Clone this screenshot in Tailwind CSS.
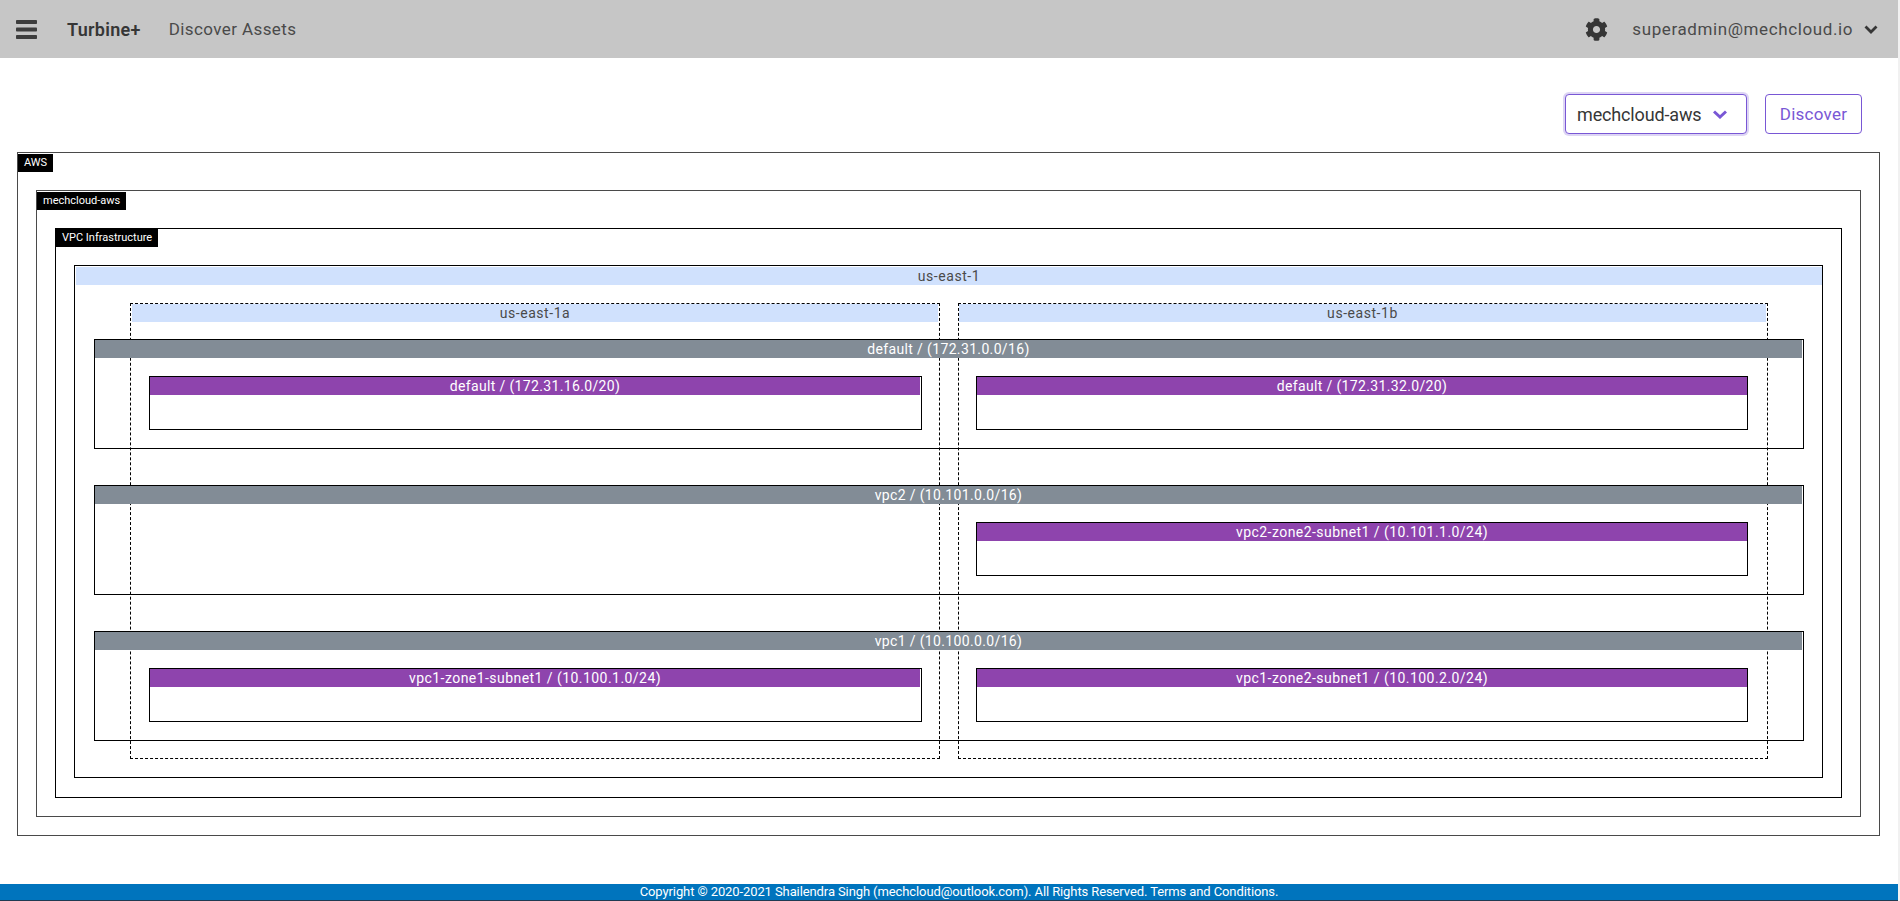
<!DOCTYPE html>
<html lang="en">
<head>
    <meta charset="UTF-8">
    <meta name="viewport" content="width=device-width, initial-scale=1.0">
    <title>Turbine+ - Discover Assets</title>
    <script src="https://cdn.jsdelivr.net/npm/@tailwindcss/browser@4"></script>
</head>
<body class="bg-[#f1f1f1] font-['Roboto',sans-serif] text-[#363636] overflow-hidden">
    <div class="w-[1898px] h-[901px] bg-white flex flex-col">
        <!-- Navbar -->
        <nav class="h-[58px] shrink-0 bg-[#c6c6c6] flex items-center justify-between">
            <div class="flex items-center">
                <svg class="ml-[16px] w-[21px] h-[19px] fill-[#3d3d3d]" viewBox="0 0 21 19">
                    <rect x="0" y="0" width="21" height="4" rx="0.8"></rect>
                    <rect x="0" y="7.5" width="21" height="4" rx="0.8"></rect>
                    <rect x="0" y="15" width="21" height="4" rx="0.8"></rect>
                </svg>
                <a href="#" class="ml-[30px] pt-px text-[18px] font-semibold tracking-[0.3px]">Turbine+</a>
                <a href="#" class="ml-[28px] pt-[2px] text-[17px] tracking-[0.4px] text-[#4a4a4a]">Discover Assets</a>
            </div>
            <div class="flex items-center">
                <svg class="w-[23px] h-[23px] fill-[#363636]" viewBox="0 0 512 512">
                    <path d="M487.4 315.7l-42.6-24.6c4.3-23.2 4.3-47 0-70.2l42.6-24.6c4.9-2.8 7.1-8.6 5.5-14-11.1-35.6-30-67.8-54.7-94.6-3.8-4.1-10-5.1-14.8-2.3L380.8 110c-17.9-15.4-38.5-27.3-60.8-35.1V25.8c0-5.6-3.9-10.5-9.4-11.7-36.7-8.2-74.3-7.8-109.2 0-5.5 1.2-9.4 6.1-9.4 11.7V75c-22.2 7.9-42.8 19.8-60.8 35.1L88.7 85.5c-4.9-2.8-11-1.9-14.8 2.3-24.7 26.7-43.6 58.9-54.7 94.6-1.7 5.4.6 11.2 5.5 14L67.3 221c-4.3 23.2-4.3 47 0 70.2l-42.6 24.6c-4.9 2.8-7.1 8.6-5.5 14 11.1 35.6 30 67.8 54.7 94.6 3.8 4.1 10 5.1 14.8 2.3l42.6-24.6c17.9 15.4 38.5 27.3 60.8 35.1v49.2c0 5.6 3.9 10.5 9.4 11.7 36.7 8.2 74.3 7.8 109.2 0 5.5-1.2 9.4-6.1 9.4-11.7v-49.2c22.2-7.9 42.8-19.8 60.8-35.1l42.6 24.6c4.9 2.8 11 1.9 14.8-2.3 24.7-26.7 43.6-58.9 54.7-94.6 1.5-5.5-.7-11.3-5.6-14.1zM256 336c-44.1 0-80-35.9-80-80s35.9-80 80-80 80 35.9 80 80-35.9 80-80 80z"></path>
                </svg>
                <span class="ml-[24px] pt-[1px] text-[17px] tracking-[0.6px] text-[#4a4a4a]">superadmin@mechcloud.io</span>
                <svg class="ml-[11px] mr-[20px] w-[14px] h-[9px] stroke-[#363636] fill-none" viewBox="0 0 14 9">
                    <path d="M1.5 1.5 L7 7 L12.5 1.5" stroke-width="2.8"></path>
                </svg>
            </div>
        </nav>

        <!-- Account picker -->
        <div class="flex justify-end gap-[18px] pt-[36px] pr-[36px]">
            <div class="w-[182px] h-[40px] flex items-center justify-between pl-[11px] pr-[19px] bg-white border border-[#7957d5] rounded-[4px] shadow-[0_0_0_2px_rgba(121,87,213,0.25)]">
                <span class="text-[18px] text-[#363636] tracking-[-0.15px]">mechcloud-aws</span>
                <svg class="w-[14px] h-[9px] stroke-[#7957d5] fill-none" viewBox="0 0 14 9">
                    <path d="M1 1.5 L7 7 L13 1.5" stroke-width="3"></path>
                </svg>
            </div>
            <button class="w-[97px] h-[40px] flex items-center justify-center pt-px bg-white border border-[#7957d5] rounded-[4px] text-[17px] tracking-[0.25px] text-[#7957d5]">Discover</button>
        </div>

        <!-- Diagram -->
        <div class="mt-[18px] ml-[17px] w-[1863px] border border-[#4a4a4a] px-[18px] pb-[18px]">
            <div class="mt-px -ml-[18px] w-fit h-[18px] flex items-center px-[6px] bg-black text-white text-[11px]">AWS</div>
            <div class="mt-[18px] border border-[#4a4a4a] px-[18px] pb-[18px]">
                <div class="mt-px -ml-[18px] w-fit h-[18px] flex items-center px-[6px] bg-black text-white text-[11px]">mechcloud-aws</div>
                <div class="mt-[18px] border border-black px-[18px] pb-[19px]">
                    <div class="-ml-[18px] w-fit h-[18px] flex items-center px-[6px] bg-black text-white text-[11px]">VPC Infrastructure</div>
                    <div class="mt-[18px] border border-black">
                        <div class="mt-px ml-px h-[18px] flex items-center justify-center bg-[#d0e1fd] text-[14px] tracking-[0.55px] text-[#4a4a4a]">us-east-1</div>
                        <div class="mt-[18px] mb-[18px] grid">
                            <!-- Zones sit behind the VPC rows -->
                            <div class="col-start-1 row-start-1 flex gap-[18px] pl-[55px]">
                                <div class="w-[810px] h-[456px] border border-dashed border-black">
                                    <div class="mx-px h-[18px] flex items-center justify-center bg-[#d0e1fd] text-[14px] tracking-[0.55px] text-[#4a4a4a]">us-east-1a</div>
                                </div>
                                <div class="w-[810px] h-[456px] border border-dashed border-black">
                                    <div class="mr-px h-[18px] flex items-center justify-center bg-[#d0e1fd] text-[14px] tracking-[0.55px] text-[#4a4a4a]">us-east-1b</div>
                                </div>
                            </div>
                            <!-- VPC rows -->
                            <div class="col-start-1 row-start-1 flex flex-col gap-[36px] pt-[36px] pb-[18px] pl-[19px] pr-[18px]">
                                <div class="h-[110px] border border-black">
                                    <div class="mr-px h-[18px] flex items-center justify-center bg-[#828c96] text-[14px] tracking-[0.35px] text-white">default / (172.31.0.0/16)</div>
                                    <div class="grid grid-cols-[773px_772px] gap-x-[54px] pt-[18px] pl-[54px]">
                                        <div class="h-[54px] border border-black bg-white">
                                            <div class="mr-px h-[18px] flex items-center justify-center bg-[#8e44ad] text-[14px] tracking-[0.35px] text-white">default / (172.31.16.0/20)</div>
                                        </div>
                                        <div class="h-[54px] border border-black bg-white">
                                            <div class="h-[18px] flex items-center justify-center bg-[#8e44ad] text-[14px] tracking-[0.35px] text-white">default / (172.31.32.0/20)</div>
                                        </div>
                                    </div>
                                </div>
                                <div class="h-[110px] border border-black">
                                    <div class="mr-px h-[18px] flex items-center justify-center bg-[#828c96] text-[14px] tracking-[0.35px] text-white">vpc2 / (10.101.0.0/16)</div>
                                    <div class="grid grid-cols-[773px_772px] gap-x-[54px] pt-[18px] pl-[54px]">
                                        <div class="col-start-2 h-[54px] border border-black bg-white">
                                            <div class="h-[18px] flex items-center justify-center bg-[#8e44ad] text-[14px] tracking-[0.45px] text-white">vpc2-zone2-subnet1 / (10.101.1.0/24)</div>
                                        </div>
                                    </div>
                                </div>
                                <div class="h-[110px] border border-black">
                                    <div class="mr-px h-[18px] flex items-center justify-center bg-[#828c96] text-[14px] tracking-[0.35px] text-white">vpc1 / (10.100.0.0/16)</div>
                                    <div class="grid grid-cols-[773px_772px] gap-x-[54px] pt-[18px] pl-[54px]">
                                        <div class="h-[54px] border border-black bg-white">
                                            <div class="mr-px h-[18px] flex items-center justify-center bg-[#8e44ad] text-[14px] tracking-[0.45px] text-white">vpc1-zone1-subnet1 / (10.100.1.0/24)</div>
                                        </div>
                                        <div class="h-[54px] border border-black bg-white">
                                            <div class="h-[18px] flex items-center justify-center bg-[#8e44ad] text-[14px] tracking-[0.45px] text-white">vpc1-zone2-subnet1 / (10.100.2.0/24)</div>
                                        </div>
                                    </div>
                                </div>
                            </div>
                        </div>
                    </div>
                </div>
            </div>
        </div>

        <!-- Footer -->
        <footer class="mt-auto h-[17px] shrink-0 bg-[#0074bd] border-b border-[#1f3a52] flex items-center justify-center pl-[20px] text-[13px] tracking-[-0.1px] text-white">
            Copyright © 2020-2021 Shailendra Singh (mechcloud@outlook.com). All Rights Reserved. Terms and Conditions.
        </footer>
    </div>
</body>
</html>
